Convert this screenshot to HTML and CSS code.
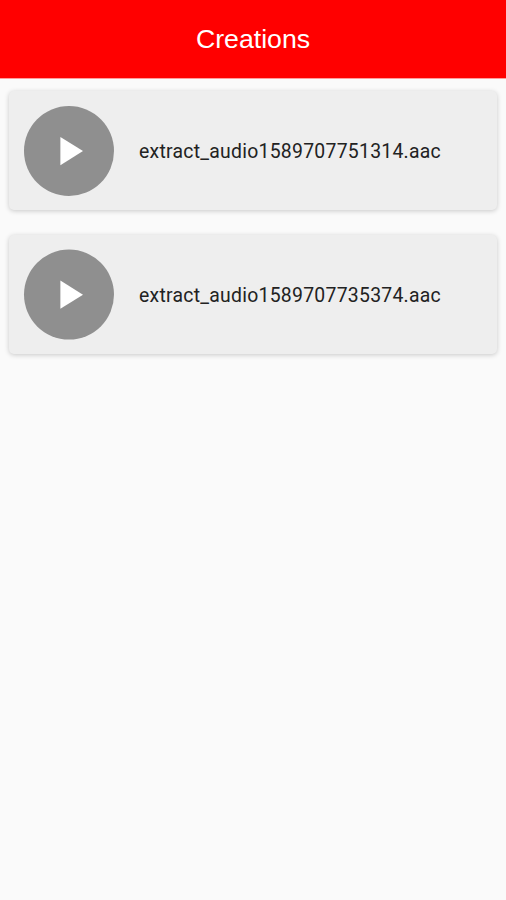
FILE: index.html
```html
<!DOCTYPE html>
<html lang="en">
<head>
<meta charset="utf-8">
<title>Creations</title>
<link rel="stylesheet" href="styles.css">
</head>
<body>
<header class="bar"><h1 class="title">Creations</h1></header>
<main class="list">
  <article class="card">
    <svg class="play" viewBox="0 0 90 90"><circle cx="45" cy="45" r="45" fill="#8f8f8f"/><path d="M36.4 31v28.2l22.6-14.1z" fill="#fff"/></svg>
    <span class="name">extract_audio1589707751314.aac</span>
  </article>
  <article class="card">
    <svg class="play" viewBox="0 0 90 90"><circle cx="45" cy="44.6" r="45" fill="#8f8f8f"/><path d="M36.4 30.6v28.2l22.6-14.1z" fill="#fff"/></svg>
    <span class="name">extract_audio1589707735374.aac</span>
  </article>
</main>
</body>
</html>
```
FILE: styles.css
```css
body {
  margin: 0;
  min-height: 900px;
  background: #fafafa;
  color: #222;
}
.bar {
  display: flex;
  align-items: center;
  justify-content: center;
  height: 78px;
  border-bottom: 1px solid #ff9c9c;
  background: #f00;
  background-clip: padding-box;
}
.title {
  margin: 0;
  color: #fff;
  font: 400 26.7px/30px "Liberation Sans", sans-serif;
}
.list {
  display: flex;
  flex-direction: column;
  gap: 25px;
  padding: 12px 9px;
}
.card {
  display: flex;
  align-items: center;
  gap: 25px;
  box-sizing: border-box;
  height: 119px;
  padding-left: 15px;
  border-radius: 5px;
  background: #eee;
  box-shadow: 0 1px 5px rgba(0, 0, 0, 0.2);
}
.play {
  width: 90px;
  height: 90px;
  overflow: visible;
}
.name {
  padding-top: 2px;
  font: 400 19.4px/24px Roboto, sans-serif;
  letter-spacing: 0.26px;
  white-space: nowrap;
}
```
